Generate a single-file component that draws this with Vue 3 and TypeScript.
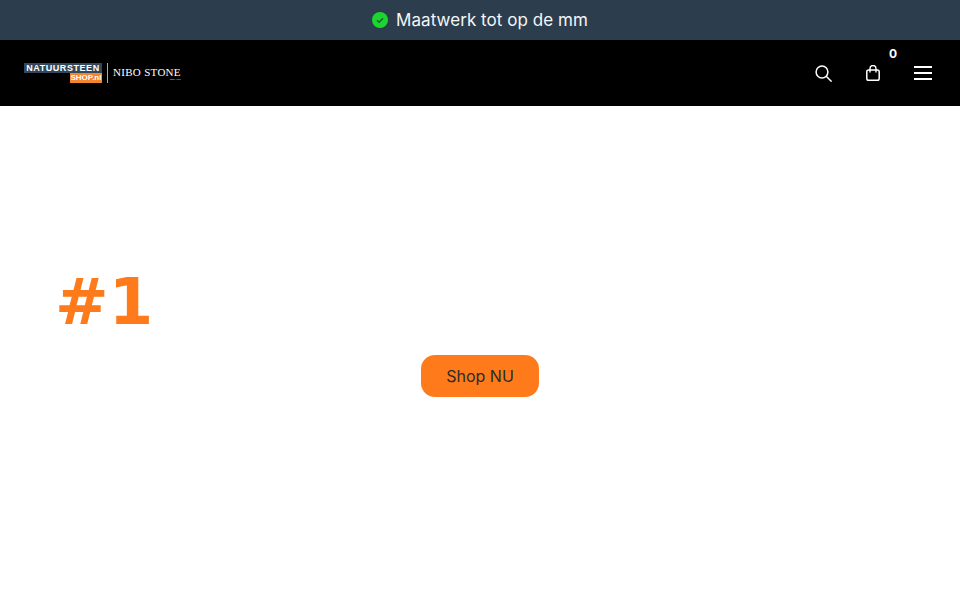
<template>
  <div class="page">
    <div class="promo">
      <svg class="promo-check" width="16" height="16" viewBox="0 0 16 16">
        <circle cx="8" cy="8" r="8" fill="#1ad62e" />
        <path d="M5 8.2l2.1 2L11 6.2" fill="none" stroke="#1c5a35" stroke-width="1.4" />
      </svg>
      <span>{{ promo }}</span>
    </div>

    <header class="nav">
      <div class="logo">
        <div class="logo-shop">
          <span class="logo-top">NATUURSTEEN</span>
          <span class="logo-bottom">SHOP.nl</span>
        </div>
        <span class="logo-line"></span>
        <div class="logo-nibo">
          <span class="logo-name">NIBO STONE</span>
          <span class="logo-since">Since 1997</span>
        </div>
      </div>
      <div class="nav-icons">
        <svg class="icon" viewBox="0 0 17 17" width="17" height="17">
          <circle cx="7" cy="7" r="5.9" fill="none" stroke="#fff" stroke-width="1.5" />
          <path d="M11.2 11.2l5.4 5.4" stroke="#fff" stroke-width="1.5" />
        </svg>
        <div class="cart">
          <svg class="icon" viewBox="0 0 14 16" width="14" height="16">
            <rect x="0.8" y="5" width="12.4" height="10.2" rx="1.8" fill="none" stroke="#fff" stroke-width="1.5" />
            <path d="M4 7.5V3.5a3 3 0 0 1 6 0v4" fill="none" stroke="#fff" stroke-width="1.4" />
          </svg>
          <span class="cart-count">{{ cartCount }}</span>
        </div>
        <svg class="icon" viewBox="0 0 18 14" width="18" height="14">
          <path d="M0 1h18M0 7h18M0 13h18" stroke="#fff" stroke-width="2" />
        </svg>
      </div>
    </header>

    <main class="hero">
      <h1 class="hero-title">#1</h1>
      <button class="hero-btn">Shop NU</button>
    </main>
  </div>
</template>

<script setup lang="ts">
const promo = 'Maatwerk tot op de mm'
const cartCount = 0
</script>

<style>
html,
body {
  margin: 0;
  background: #fff;
}
</style>

<style scoped>
.page {
  height: 600px;
  overflow: hidden;
  display: flex;
  flex-direction: column;
  font-family: Inter, sans-serif;
}

.promo {
  height: 40px;
  flex-shrink: 0;
  display: flex;
  align-items: center;
  justify-content: center;
  gap: 8px;
  background: #2c3e4d;
  color: #f3f6f8;
  font-family: Inter, sans-serif;
  font-size: 17px;
  letter-spacing: 0.05px;
}

.nav {
  height: 66px;
  flex-shrink: 0;
  display: flex;
  align-items: center;
  justify-content: space-between;
  padding: 0 28px 0 24px;
  background: #000;
}

/* Logo */
.logo {
  display: flex;
  align-items: center;
}

.logo-shop {
  width: 78px;
  display: flex;
  flex-direction: column;
  align-items: flex-end;
}

.logo-top {
  width: 100%;
  height: 10px;
  line-height: 10px;
  text-align: center;
  background: #33475a;
  color: #fff;
  font-family: "Liberation Sans", sans-serif;
  font-size: 9px;
  font-weight: 700;
  letter-spacing: 0.55px;
  white-space: nowrap;
}

.logo-bottom {
  width: 32px;
  height: 10px;
  line-height: 10px;
  text-align: center;
  background: #f2832f;
  color: #fff;
  font-family: "Liberation Sans", sans-serif;
  font-size: 8px;
  font-weight: 700;
  white-space: nowrap;
}

.logo-line {
  width: 1px;
  height: 20px;
  margin: 0 5px;
  background: #aaa;
}

.logo-nibo {
  display: flex;
  flex-direction: column;
  align-items: flex-end;
  padding-top: 2px;
  color: #fff;
  font-family: "Liberation Serif", serif;
}

.logo-name {
  font-size: 11px;
  line-height: 11px;
  letter-spacing: 0.3px;
  white-space: nowrap;
}

.logo-since {
  font-size: 2.5px;
  line-height: 3px;
}

/* Icons */
.nav-icons {
  display: flex;
  align-items: center;
  gap: 34px;
}

.icon {
  display: block;
}

.cart {
  position: relative;
}

.cart-count {
  position: absolute;
  top: -18px;
  left: 23px;
  color: #fff;
  font-size: 12px;
  font-weight: 700;
  line-height: 14px;
}

/* Hero */
.hero {
  flex: 1;
  display: flex;
  flex-direction: column;
  padding: 160px 55px 0;
}

.hero-title {
  margin: 0 0 17px;
  color: #ff7a1a;
  font-family: "DejaVu Sans", sans-serif;
  font-size: 64px;
  font-weight: 700;
  line-height: 72px;
}

.hero-btn {
  align-self: center;
  height: 42px;
  padding: 0 25px;
  border: none;
  border-radius: 14px;
  background: #ff7a1a;
  color: #2b2b2b;
  font-family: Inter, sans-serif;
  font-size: 16px;
}
</style>
